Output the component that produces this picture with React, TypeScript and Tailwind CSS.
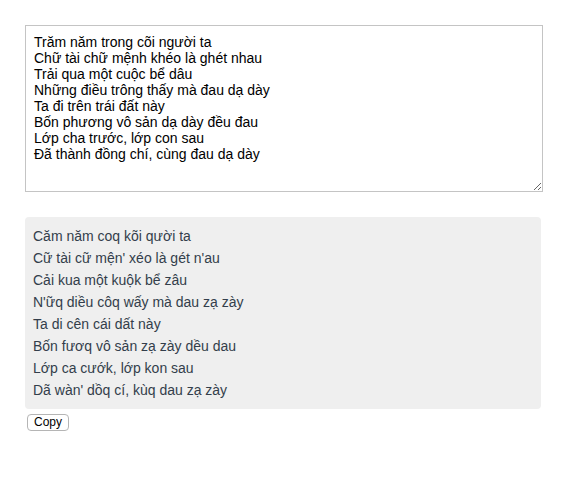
import { useState } from 'react';

const INPUT = `Trăm năm trong cõi người ta
Chữ tài chữ mệnh khéo là ghét nhau
Trải qua một cuộc bể dâu
Những điều trông thấy mà đau dạ dày
Ta đi trên trái đất này
Bốn phương vô sản dạ dày đều đau
Lớp cha trước, lớp con sau
Đã thành đồng chí, cùng đau dạ dày`;

const OUTPUT = [
  'Căm năm coq kõi qười ta',
  "Cữ tài cữ mện' xéo là gét n'au",
  'Cải kua một kuộk bể zâu',
  "N'ữq diều côq wấy mà dau zạ zày",
  'Ta di cên cái dất này',
  'Bốn fươq vô sản zạ zày dều dau',
  'Lớp ca cướk, lớp kon sau',
  "Dã wàn' dồq cí, kùq dau zạ zày",
];

export default function App() {
  const [text, setText] = useState(INPUT);

  return (
    <div className="flex min-h-[480px] flex-col bg-white pl-[25px] pr-[21px] pt-[25px] font-['Liberation_Sans',Arial,sans-serif]">
      <textarea
        value={text}
        onChange={(e) => setText(e.target.value)}
        className="h-[167px] w-full resize-y border border-[#c4c4c4] bg-white px-2 py-2 text-[14px] leading-4 text-black outline-none"
      />
      <div className="mt-[25px] mr-[2px] rounded-[4px] bg-[#efefef] px-2 py-2 text-[14px] leading-[22px] text-[#333e4b]">
        {OUTPUT.map((line) => (
          <div key={line}>{line}</div>
        ))}
      </div>
      <button
        onClick={() => navigator.clipboard?.writeText(OUTPUT.join('\n'))}
        className="mt-[5px] ml-[2px] h-[17px] self-start rounded-[4px] border border-[#b5b5b5] bg-white px-[6px] text-[12px] leading-[15px] text-black"
      >
        Copy
      </button>
    </div>
  );
}
